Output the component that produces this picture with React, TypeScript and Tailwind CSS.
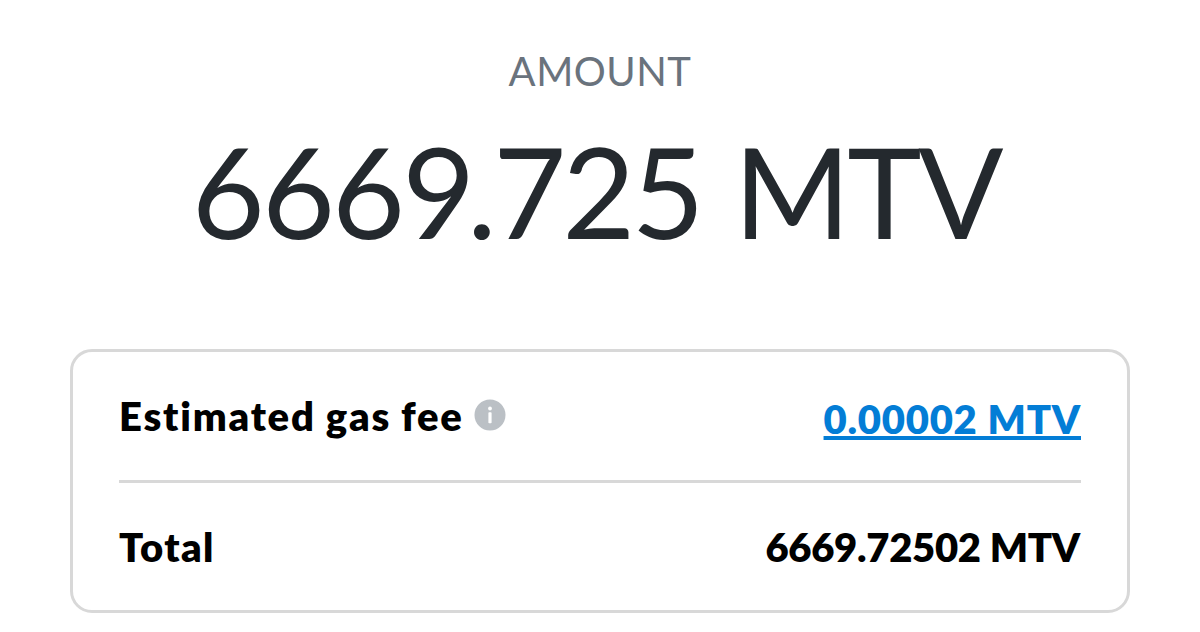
export default function App() {
  return (
    <main className="flex h-[632px] w-[1200px] flex-col items-center overflow-hidden bg-white px-[70px] pt-[46px] font-['Lato',sans-serif] text-black">
      <p className="h-[50px] whitespace-nowrap text-[40px] leading-[50px] tracking-[0.5px] text-[#6a737d]">AMOUNT</p>
      <h1 className="mt-[23px] h-[144px] whitespace-nowrap pr-[8px] text-[126px] leading-[144px] font-normal tracking-[-3.4px] text-[#24292e]">
        <span className="tracking-[-2.9px]">666</span><span className="tracking-[-8.5px]">9</span>.<span className="tracking-[-4px]">72</span><span className="tracking-[-1.5px]">5 </span>MTV
      </h1>
      <section className="mt-[86px] h-[264px] w-full shrink-0 rounded-[22px] border-[3px] border-[#d8d8d8] px-[46px]">
        <div className="flex h-[131px] items-center justify-between border-b-[3px] border-[#d8d8d8]">
          <div className="flex items-center gap-[8px]">
            <span className="whitespace-nowrap text-[40px] font-extrabold tracking-[1.78px] [font-variant-ligatures:none] [word-spacing:-1px]">Estimated gas fee</span>
            <svg className="mb-[2px] ml-[2px] size-[32px]" viewBox="0 0 32 32" aria-hidden="true">
              <circle cx="16" cy="16" r="15.5" fill="#bbc0c5" />
              <circle cx="16" cy="9.5" r="1.9" fill="white" />
              <rect x="14.4" y="13.2" width="3.2" height="11" rx="0.8" fill="white" />
            </svg>
          </div>
          <a className="mt-[5px] whitespace-nowrap text-[40px] font-extrabold tracking-[0.75px] text-[#037dd6] underline decoration-[4px] underline-offset-[2px] [text-decoration-skip-ink:none]">0.00002 MTV</a>
        </div>
        <div className="flex h-[127px] items-center justify-between text-[40px] font-extrabold">
          <span className="tracking-[1.4px]">Total</span>
          <span className="pr-[1px] tracking-[-0.3px]">6669.72502 MTV</span>
        </div>
      </section>
    </main>
  );
}
